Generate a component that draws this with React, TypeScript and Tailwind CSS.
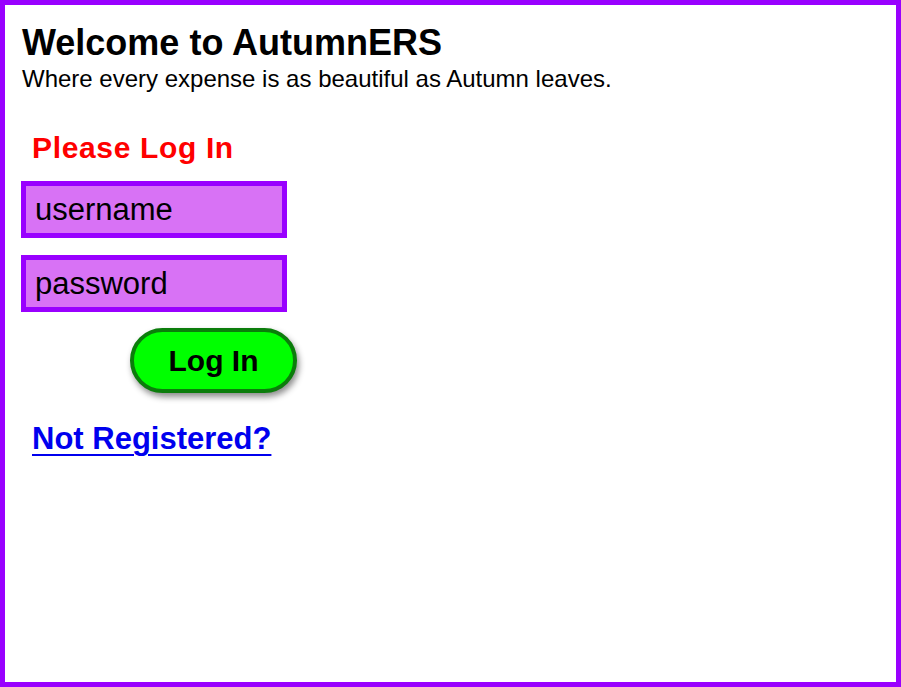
export default function App() {
  return (
    <div className="h-[687px] w-[901px] border-[5px] border-[#9900ff] bg-white font-['Liberation_Sans',Arial,sans-serif] text-black">
      <div className="px-[17px] pt-[18px]">
        <h1 className="text-[36px] font-bold leading-[40px]">Welcome to AutumnERS</h1>
        <p className="mt-[2px] text-[24px] leading-[28px]">Where every expense is as beautiful as Autumn leaves.</p>

        <div className="-ml-px mt-[38px] flex flex-col items-start">
          <h2 className="ml-[11px] text-[30px] font-bold leading-[34px] tracking-[0.65px] text-[#ff0000]">Please Log In</h2>

          <input
            readOnly
            value="username"
            className="mt-[16px] h-[57px] w-[266px] border-[5px] border-[#9900ff] bg-[#d872f5] px-[9px] text-[31px] text-black outline-none"
          />
          <input
            readOnly
            value="password"
            className="mt-[17px] h-[57px] w-[266px] border-[5px] border-[#9900ff] bg-[#d872f5] px-[9px] text-[31px] text-black outline-none"
          />

          <button className="ml-[109px] mt-[16px] h-[65px] w-[167px] rounded-full border-[4px] border-[#0b7d0b] bg-[#00ff00] text-[30px] font-bold shadow-[2px_4px_6px_rgba(0,0,0,0.45)]">
            Log In
          </button>

          <a
            href="#"
            className="ml-[11px] mt-[28px] text-[31px] font-bold leading-[36px] text-[#0000ee] underline decoration-[#0000ee] decoration-2 underline-offset-[5px]"
          >
            Not Registered?
          </a>
        </div>
      </div>
    </div>
  );
}
